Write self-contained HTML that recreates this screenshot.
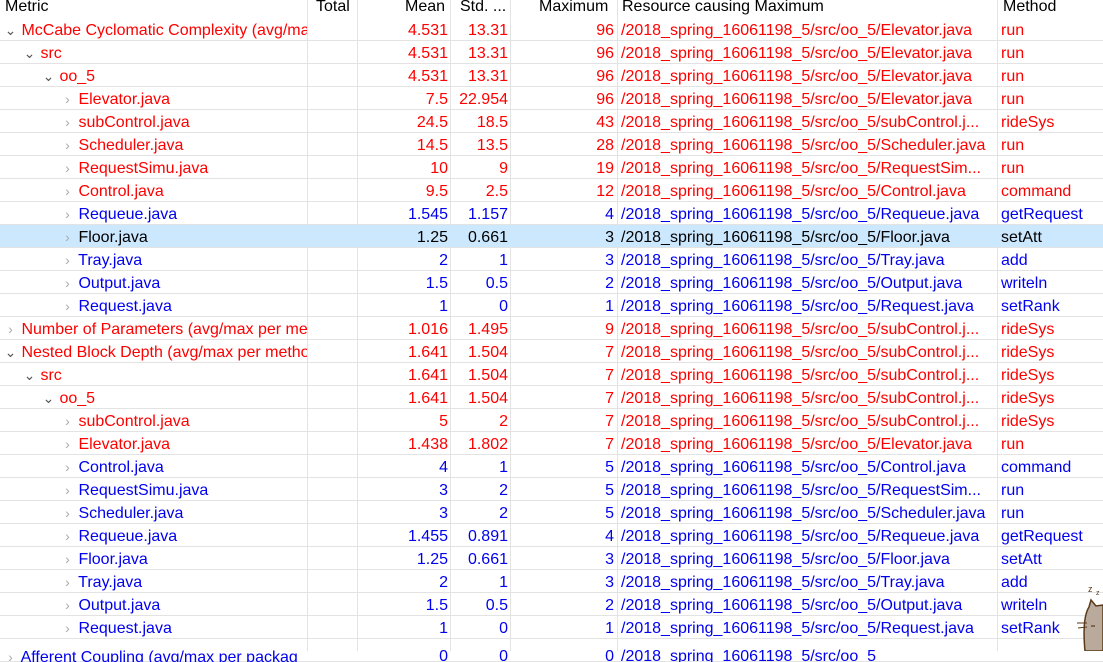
<!DOCTYPE html>
<html><head><meta charset="utf-8"><style>
*{margin:0;padding:0;box-sizing:border-box}
body{width:1103px;height:651px;overflow:hidden;background:#fff;font-family:"Liberation Sans","Noto Sans CJK SC",sans-serif;font-size:16px;position:relative}
.h{position:absolute;top:0;left:0;width:1103px;height:18px;color:#000;line-height:14px}
.r{position:absolute;left:0;width:1103px;height:23px;border-bottom:1px solid #e3e3e3;line-height:25px;white-space:nowrap}
.r.R{color:#f00}.r.B{color:#0000ee}
.r.sel{background:#cce8ff;color:#000}
.c{position:absolute;top:0;height:22px;overflow:hidden;white-space:nowrap}
.m{left:0;width:307px}
.t{left:308px;width:48px;text-align:right}
.mn{left:358px;width:90px;text-align:right}
.s{left:451px;width:57px;text-align:right}
.x{left:511px;width:103px;text-align:right}
.rs{left:621px;width:375px}
.me{left:1001px;width:102px}
.vl{position:absolute;top:0;height:651px;width:1px;background:#e3e3e3}
.ch{display:inline-block;width:13px;color:#555;font-size:14px;text-align:center}
.cl{color:#aaa}
</style></head><body>
<div class="vl" style="left:307px"></div>
<div class="vl" style="left:357px"></div>
<div class="vl" style="left:450px"></div>
<div class="vl" style="left:510px"></div>
<div class="vl" style="left:617px"></div>
<div class="vl" style="left:997px"></div>
<div class="h"><span class="c m" style="left:5px">Metric</span><span class="c" style="left:316px">Total</span><span class="c" style="left:405px">Mean</span><span class="c" style="left:460px">Std. ...</span><span class="c" style="left:539px">Maximum</span><span class="c" style="left:622px">Resource causing Maximum</span><span class="c" style="left:1003px">Method</span></div>

<div class="r R" style="top:18px"><span class="c m" style="padding-left:4px"><span class="ch">⌄</span> McCabe Cyclomatic Complexity (avg/max per method)</span><span class="c mn">4.531</span><span class="c s">13.31</span><span class="c x">96</span><span class="c rs">/2018_spring_16061198_5/src/oo_5/Elevator.java</span><span class="c me">run</span></div>
<div class="r R" style="top:41px"><span class="c m" style="padding-left:23px"><span class="ch">⌄</span> src</span><span class="c mn">4.531</span><span class="c s">13.31</span><span class="c x">96</span><span class="c rs">/2018_spring_16061198_5/src/oo_5/Elevator.java</span><span class="c me">run</span></div>
<div class="r R" style="top:64px"><span class="c m" style="padding-left:42px"><span class="ch">⌄</span> oo_5</span><span class="c mn">4.531</span><span class="c s">13.31</span><span class="c x">96</span><span class="c rs">/2018_spring_16061198_5/src/oo_5/Elevator.java</span><span class="c me">run</span></div>
<div class="r R" style="top:87px"><span class="c m" style="padding-left:61px"><span class="ch cl">›</span> Elevator.java</span><span class="c mn">7.5</span><span class="c s">22.954</span><span class="c x">96</span><span class="c rs">/2018_spring_16061198_5/src/oo_5/Elevator.java</span><span class="c me">run</span></div>
<div class="r R" style="top:110px"><span class="c m" style="padding-left:61px"><span class="ch cl">›</span> subControl.java</span><span class="c mn">24.5</span><span class="c s">18.5</span><span class="c x">43</span><span class="c rs">/2018_spring_16061198_5/src/oo_5/subControl.j...</span><span class="c me">rideSys</span></div>
<div class="r R" style="top:133px"><span class="c m" style="padding-left:61px"><span class="ch cl">›</span> Scheduler.java</span><span class="c mn">14.5</span><span class="c s">13.5</span><span class="c x">28</span><span class="c rs">/2018_spring_16061198_5/src/oo_5/Scheduler.java</span><span class="c me">run</span></div>
<div class="r R" style="top:156px"><span class="c m" style="padding-left:61px"><span class="ch cl">›</span> RequestSimu.java</span><span class="c mn">10</span><span class="c s">9</span><span class="c x">19</span><span class="c rs">/2018_spring_16061198_5/src/oo_5/RequestSim...</span><span class="c me">run</span></div>
<div class="r R" style="top:179px"><span class="c m" style="padding-left:61px"><span class="ch cl">›</span> Control.java</span><span class="c mn">9.5</span><span class="c s">2.5</span><span class="c x">12</span><span class="c rs">/2018_spring_16061198_5/src/oo_5/Control.java</span><span class="c me">command</span></div>
<div class="r B" style="top:202px"><span class="c m" style="padding-left:61px"><span class="ch cl">›</span> Requeue.java</span><span class="c mn">1.545</span><span class="c s">1.157</span><span class="c x">4</span><span class="c rs">/2018_spring_16061198_5/src/oo_5/Requeue.java</span><span class="c me">getRequest</span></div>
<div class="r sel" style="top:225px"><span class="c m" style="padding-left:61px"><span class="ch cl">›</span> Floor.java</span><span class="c mn">1.25</span><span class="c s">0.661</span><span class="c x">3</span><span class="c rs">/2018_spring_16061198_5/src/oo_5/Floor.java</span><span class="c me">setAtt</span></div>
<div class="r B" style="top:248px"><span class="c m" style="padding-left:61px"><span class="ch cl">›</span> Tray.java</span><span class="c mn">2</span><span class="c s">1</span><span class="c x">3</span><span class="c rs">/2018_spring_16061198_5/src/oo_5/Tray.java</span><span class="c me">add</span></div>
<div class="r B" style="top:271px"><span class="c m" style="padding-left:61px"><span class="ch cl">›</span> Output.java</span><span class="c mn">1.5</span><span class="c s">0.5</span><span class="c x">2</span><span class="c rs">/2018_spring_16061198_5/src/oo_5/Output.java</span><span class="c me">writeln</span></div>
<div class="r B" style="top:294px"><span class="c m" style="padding-left:61px"><span class="ch cl">›</span> Request.java</span><span class="c mn">1</span><span class="c s">0</span><span class="c x">1</span><span class="c rs">/2018_spring_16061198_5/src/oo_5/Request.java</span><span class="c me">setRank</span></div>
<div class="r R" style="top:317px"><span class="c m" style="padding-left:4px"><span class="ch cl">›</span> Number of Parameters (avg/max per method)</span><span class="c mn">1.016</span><span class="c s">1.495</span><span class="c x">9</span><span class="c rs">/2018_spring_16061198_5/src/oo_5/subControl.j...</span><span class="c me">rideSys</span></div>
<div class="r R" style="top:340px"><span class="c m" style="padding-left:4px"><span class="ch">⌄</span> Nested Block Depth (avg/max per method)</span><span class="c mn">1.641</span><span class="c s">1.504</span><span class="c x">7</span><span class="c rs">/2018_spring_16061198_5/src/oo_5/subControl.j...</span><span class="c me">rideSys</span></div>
<div class="r R" style="top:363px"><span class="c m" style="padding-left:23px"><span class="ch">⌄</span> src</span><span class="c mn">1.641</span><span class="c s">1.504</span><span class="c x">7</span><span class="c rs">/2018_spring_16061198_5/src/oo_5/subControl.j...</span><span class="c me">rideSys</span></div>
<div class="r R" style="top:386px"><span class="c m" style="padding-left:42px"><span class="ch">⌄</span> oo_5</span><span class="c mn">1.641</span><span class="c s">1.504</span><span class="c x">7</span><span class="c rs">/2018_spring_16061198_5/src/oo_5/subControl.j...</span><span class="c me">rideSys</span></div>
<div class="r R" style="top:409px"><span class="c m" style="padding-left:61px"><span class="ch cl">›</span> subControl.java</span><span class="c mn">5</span><span class="c s">2</span><span class="c x">7</span><span class="c rs">/2018_spring_16061198_5/src/oo_5/subControl.j...</span><span class="c me">rideSys</span></div>
<div class="r R" style="top:432px"><span class="c m" style="padding-left:61px"><span class="ch cl">›</span> Elevator.java</span><span class="c mn">1.438</span><span class="c s">1.802</span><span class="c x">7</span><span class="c rs">/2018_spring_16061198_5/src/oo_5/Elevator.java</span><span class="c me">run</span></div>
<div class="r B" style="top:455px"><span class="c m" style="padding-left:61px"><span class="ch cl">›</span> Control.java</span><span class="c mn">4</span><span class="c s">1</span><span class="c x">5</span><span class="c rs">/2018_spring_16061198_5/src/oo_5/Control.java</span><span class="c me">command</span></div>
<div class="r B" style="top:478px"><span class="c m" style="padding-left:61px"><span class="ch cl">›</span> RequestSimu.java</span><span class="c mn">3</span><span class="c s">2</span><span class="c x">5</span><span class="c rs">/2018_spring_16061198_5/src/oo_5/RequestSim...</span><span class="c me">run</span></div>
<div class="r B" style="top:501px"><span class="c m" style="padding-left:61px"><span class="ch cl">›</span> Scheduler.java</span><span class="c mn">3</span><span class="c s">2</span><span class="c x">5</span><span class="c rs">/2018_spring_16061198_5/src/oo_5/Scheduler.java</span><span class="c me">run</span></div>
<div class="r B" style="top:524px"><span class="c m" style="padding-left:61px"><span class="ch cl">›</span> Requeue.java</span><span class="c mn">1.455</span><span class="c s">0.891</span><span class="c x">4</span><span class="c rs">/2018_spring_16061198_5/src/oo_5/Requeue.java</span><span class="c me">getRequest</span></div>
<div class="r B" style="top:547px"><span class="c m" style="padding-left:61px"><span class="ch cl">›</span> Floor.java</span><span class="c mn">1.25</span><span class="c s">0.661</span><span class="c x">3</span><span class="c rs">/2018_spring_16061198_5/src/oo_5/Floor.java</span><span class="c me">setAtt</span></div>
<div class="r B" style="top:570px"><span class="c m" style="padding-left:61px"><span class="ch cl">›</span> Tray.java</span><span class="c mn">2</span><span class="c s">1</span><span class="c x">3</span><span class="c rs">/2018_spring_16061198_5/src/oo_5/Tray.java</span><span class="c me">add</span></div>
<div class="r B" style="top:593px"><span class="c m" style="padding-left:61px"><span class="ch cl">›</span> Output.java</span><span class="c mn">1.5</span><span class="c s">0.5</span><span class="c x">2</span><span class="c rs">/2018_spring_16061198_5/src/oo_5/Output.java</span><span class="c me">writeln</span></div>
<div class="r B" style="top:616px"><span class="c m" style="padding-left:61px"><span class="ch cl">›</span> Request.java</span><span class="c mn">1</span><span class="c s">0</span><span class="c x">1</span><span class="c rs">/2018_spring_16061198_5/src/oo_5/Request.java</span><span class="c me">setRank</span></div>
<div class="r B" style="top:639px;line-height:36px"><span class="c m" style="padding-left:4px;height:23px"><span class="ch cl">›</span> Afferent Coupling (avg/max per packag</span><span class="c mn" style="height:23px">0</span><span class="c s" style="height:23px">0</span><span class="c x" style="height:23px">0</span><span class="c rs" style="height:23px">/2018_spring_16061198_5/src/oo_5</span></div>

<svg style="position:absolute;left:1075px;top:580px" width="28" height="71" viewBox="0 0 28 71">
<text x="13" y="12" font-size="9" fill="#5a3a1a" font-family="Liberation Sans">z</text>
<text x="21" y="15" font-size="7" fill="#5a3a1a" font-family="Liberation Sans">z</text>
<path d="M10 71 C8 50 9 35 14 27 L16 20 L21 26 L28 25 L28 71 Z" fill="#b9aa9b" stroke="#5a3a1a" stroke-width="1.5"/>
<path d="M2 43 L12 43 M3 48 L12 47" stroke="#5a3a1a" stroke-width="1"/>
<path d="M16 46 L20 46" stroke="#5a3a1a" stroke-width="1.2"/>
</svg>
</body></html>
